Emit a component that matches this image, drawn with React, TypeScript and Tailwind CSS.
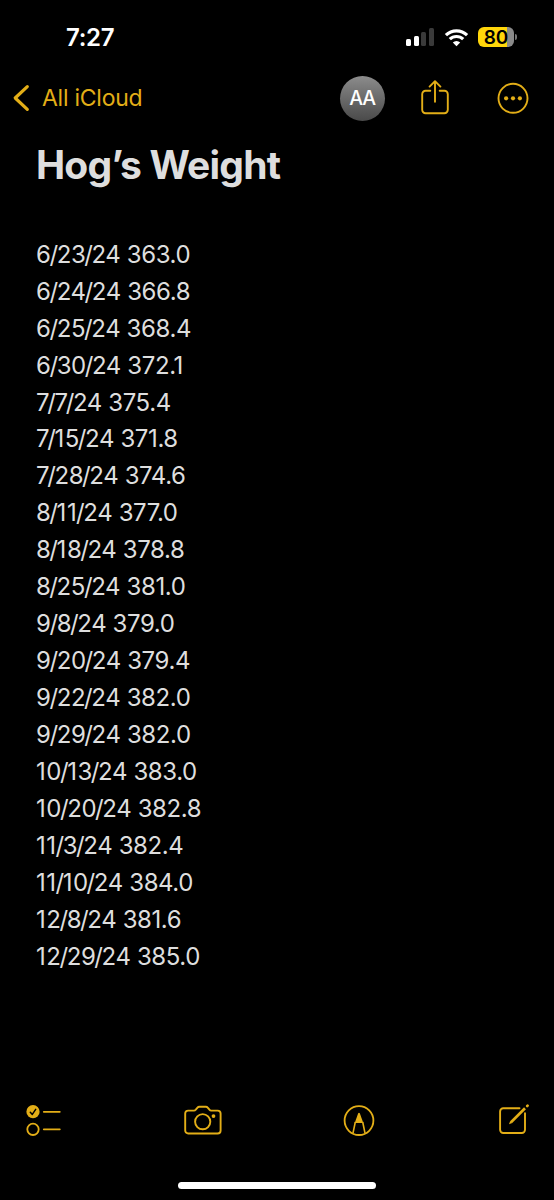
const entries = [
  { date: "6/23/24", weight: "363.0" },
  { date: "6/24/24", weight: "366.8" },
  { date: "6/25/24", weight: "368.4" },
  { date: "6/30/24", weight: "372.1" },
  { date: "7/7/24", weight: "375.4" },
  { date: "7/15/24", weight: "371.8" },
  { date: "7/28/24", weight: "374.6" },
  { date: "8/11/24", weight: "377.0" },
  { date: "8/18/24", weight: "378.8" },
  { date: "8/25/24", weight: "381.0" },
  { date: "9/8/24", weight: "379.0" },
  { date: "9/20/24", weight: "379.4" },
  { date: "9/22/24", weight: "382.0" },
  { date: "9/29/24", weight: "382.0" },
  { date: "10/13/24", weight: "383.0" },
  { date: "10/20/24", weight: "382.8" },
  { date: "11/3/24", weight: "382.4" },
  { date: "11/10/24", weight: "384.0" },
  { date: "12/8/24", weight: "381.6" },
  { date: "12/29/24", weight: "385.0" },
]

// Spacing of the characters that need other than the default tracking
const spacing: Record<string, string> = {
  "/": "-ml-[1.1px] -mr-[1px]",
  "1": "mr-[0.9px]",
  "7": "-mr-[0.9px]",
}

function StatusBar() {
  return (
    <div className="flex h-[74px] items-center justify-between pl-[66px] pr-[37px] text-white">
      <span className="pt-px text-[24px] font-semibold leading-none tracking-[-0.3px]">7:27</span>
      <div className="flex items-center">
        <div className="flex h-[18px] items-end gap-[2.6px]">
          <div className="h-[7px] w-[5px] rounded-[1.5px] bg-white" />
          <div className="h-[10.5px] w-[5px] rounded-[1.5px] bg-white" />
          <div className="h-[14px] w-[5px] rounded-[1.5px] bg-[#3a3a3a]" />
          <div className="h-[18px] w-[5px] rounded-[1.5px] bg-[#3a3a3a]" />
        </div>
        <svg className="ml-[10px]" width="25" height="19" viewBox="0 0 25 19" fill="none" stroke="white">
          <path d="M1.9 7.1a15.2 15.2 0 0 1 21.2 0" strokeWidth="3.2" />
          <path d="M5.8 11.2a9.6 9.6 0 0 1 13.4 0" strokeWidth="3.2" />
          <path d="M8.8 14.4a5.3 5.3 0 0 1 7.4 0L12.5 18.2z" fill="white" stroke="none" />
        </svg>
        <div className="ml-[9px] flex h-5 w-9 items-center justify-center rounded-[6px] bg-linear-to-r from-[#ffd60a] from-80% to-[#8a8a8a] to-80% text-[19px] font-semibold leading-none text-black">
          80
        </div>
        <div className="ml-px h-[6px] w-[2px] rounded-r-full bg-[#777777]" />
      </div>
    </div>
  )
}

function NavBar() {
  return (
    <div className="flex h-12 items-center pl-3 pr-[25px] text-[#e3ae17]">
      <svg width="18" height="28" viewBox="0 0 18 28" fill="none" stroke="currentColor" strokeWidth="3.2" strokeLinecap="round" strokeLinejoin="round">
        <path d="M15.3 2.6 3.2 14l12.1 11.4" />
      </svg>
      <span className="ml-[12px] pt-px text-[23px] leading-none tracking-[-0.25px]">All iCloud</span>
      <div className="ml-auto flex size-[45px] items-center justify-center rounded-full bg-linear-to-b from-[#8c8c8c] to-[#4a4a4a] pt-[2px] pr-px text-[19.5px] font-medium leading-none tracking-[-1.2px] text-white">
        AA
      </div>
      <svg className="ml-9" width="28" height="36" viewBox="0 0 28 36" fill="none" stroke="currentColor" strokeWidth="1.9" strokeLinecap="round" strokeLinejoin="round">
        <path d="M9.3 10.8H4.6A3.4 3.4 0 0 0 1.2 14.2v15.6a3.4 3.4 0 0 0 3.4 3.4h18.8a3.4 3.4 0 0 0 3.4-3.4V14.2a3.4 3.4 0 0 0-3.4-3.4h-4.7" />
        <path d="M14 21.7V1.3M8.6 6.6 14 1.2l5.4 5.4" />
      </svg>
      <svg className="ml-[48px]" width="32" height="32" viewBox="0 0 32 32" fill="none">
        <circle cx="16" cy="16.3" r="14.5" stroke="currentColor" strokeWidth="1.9" />
        <circle cx="9.1" cy="16.3" r="2.1" fill="currentColor" />
        <circle cx="16" cy="16.3" r="2.1" fill="currentColor" />
        <circle cx="22.9" cy="16.3" r="2.1" fill="currentColor" />
      </svg>
    </div>
  )
}

function EntryDate({ date }: { date: string }) {
  return (
    <span>
      {date.split("").map((char, index) => (
        <span key={index} className={spacing[char]}>
          {char}
        </span>
      ))}
    </span>
  )
}

function Toolbar() {
  return (
    <div className="flex h-10 items-center pl-[26px] text-[#e3ae17]">
      {/* Checklist */}
      <svg width="36" height="40" viewBox="0 0 36 40" fill="none" stroke="currentColor" strokeWidth="1.8">
        <circle cx="7" cy="11.7" r="6.6" fill="currentColor" stroke="none" />
        <path d="m4.3 12.2 2 2.2 3.4-5" stroke="black" strokeWidth="1.5" strokeLinecap="round" strokeLinejoin="round" />
        <circle cx="7" cy="29.3" r="5.7" />
        <path d="M17.8 11.8h16M17.8 29.3h16" strokeLinecap="round" />
      </svg>
      {/* Camera */}
      <svg className="ml-[122px]" width="38" height="40" viewBox="0 0 38 40" fill="none" stroke="currentColor" strokeWidth="1.9" strokeLinejoin="round">
        <path d="M4.2 10.6h5.8c.8 0 1.3-.3 1.8-.9l1.5-1.9c.6-.7 1.2-1 2.1-1h6.4c.9 0 1.5.3 2.1 1l1.5 1.9c.5.6 1 .9 1.8.9h6.4a3 3 0 0 1 3 3v16.9a3 3 0 0 1-3 3H4.2a3 3 0 0 1-3-3V13.6a3 3 0 0 1 3-3z" />
        <circle cx="18.7" cy="21.7" r="7.6" />
        <circle cx="29.5" cy="16.1" r="1.9" fill="currentColor" stroke="none" />
      </svg>
      {/* Markup */}
      <svg className="ml-[121px]" width="32" height="40" viewBox="0 0 32 40" fill="none" stroke="currentColor" strokeWidth="1.8">
        <circle cx="16" cy="20.6" r="14.4" />
        <path d="M15.2 13.3q.8-1.3 1.6 0L20.3 23h-8.6z" fill="currentColor" stroke="none" />
        <path d="M12.3 22 10 33.2M19.7 22 22 33.2" strokeWidth="1.6" />
      </svg>
      {/* Compose */}
      <svg className="ml-[123px]" width="32" height="40" viewBox="0 0 32 40" fill="none" stroke="currentColor" strokeWidth="1.9" strokeLinecap="round">
        <path d="M21.5 8.3H5.3a3.2 3.2 0 0 0-3.2 3.2v18.3a3.2 3.2 0 0 0 3.2 3.2h18.5a3.2 3.2 0 0 0 3.2-3.2V13.3" />
        <path d="m13 22.3 14-14" strokeWidth="2.7" strokeLinecap="butt" />
        <path d="m11 24.3 1.2-3.2 2 2z" fill="currentColor" stroke="none" />
        <path d="m29.2 6 .4-.4" strokeWidth="2.7" />
      </svg>
    </div>
  )
}

export default function App() {
  return (
    <div className="flex h-[1200px] w-[554px] flex-col bg-black font-['Inter',sans-serif]">
      <StatusBar />
      <NavBar />
      <main className="flex-1 pl-9 text-[#dedede]">
        <h1 className="mt-[19px] text-[39px] font-bold leading-[48px] tracking-[-0.8px]">Hog’s Weight</h1>
        <ul className="mt-[47.7px] text-[24px] leading-[36.95px] tracking-[-0.4px]">
          {entries.map((entry) => (
            <li key={entry.date}>
              <EntryDate date={entry.date} /> {entry.weight}
            </li>
          ))}
        </ul>
      </main>
      <Toolbar />
      <div className="flex h-[60px] items-end justify-center pb-[11px]">
        <div className="h-[7px] w-[198px] rounded-full bg-white" />
      </div>
    </div>
  )
}
